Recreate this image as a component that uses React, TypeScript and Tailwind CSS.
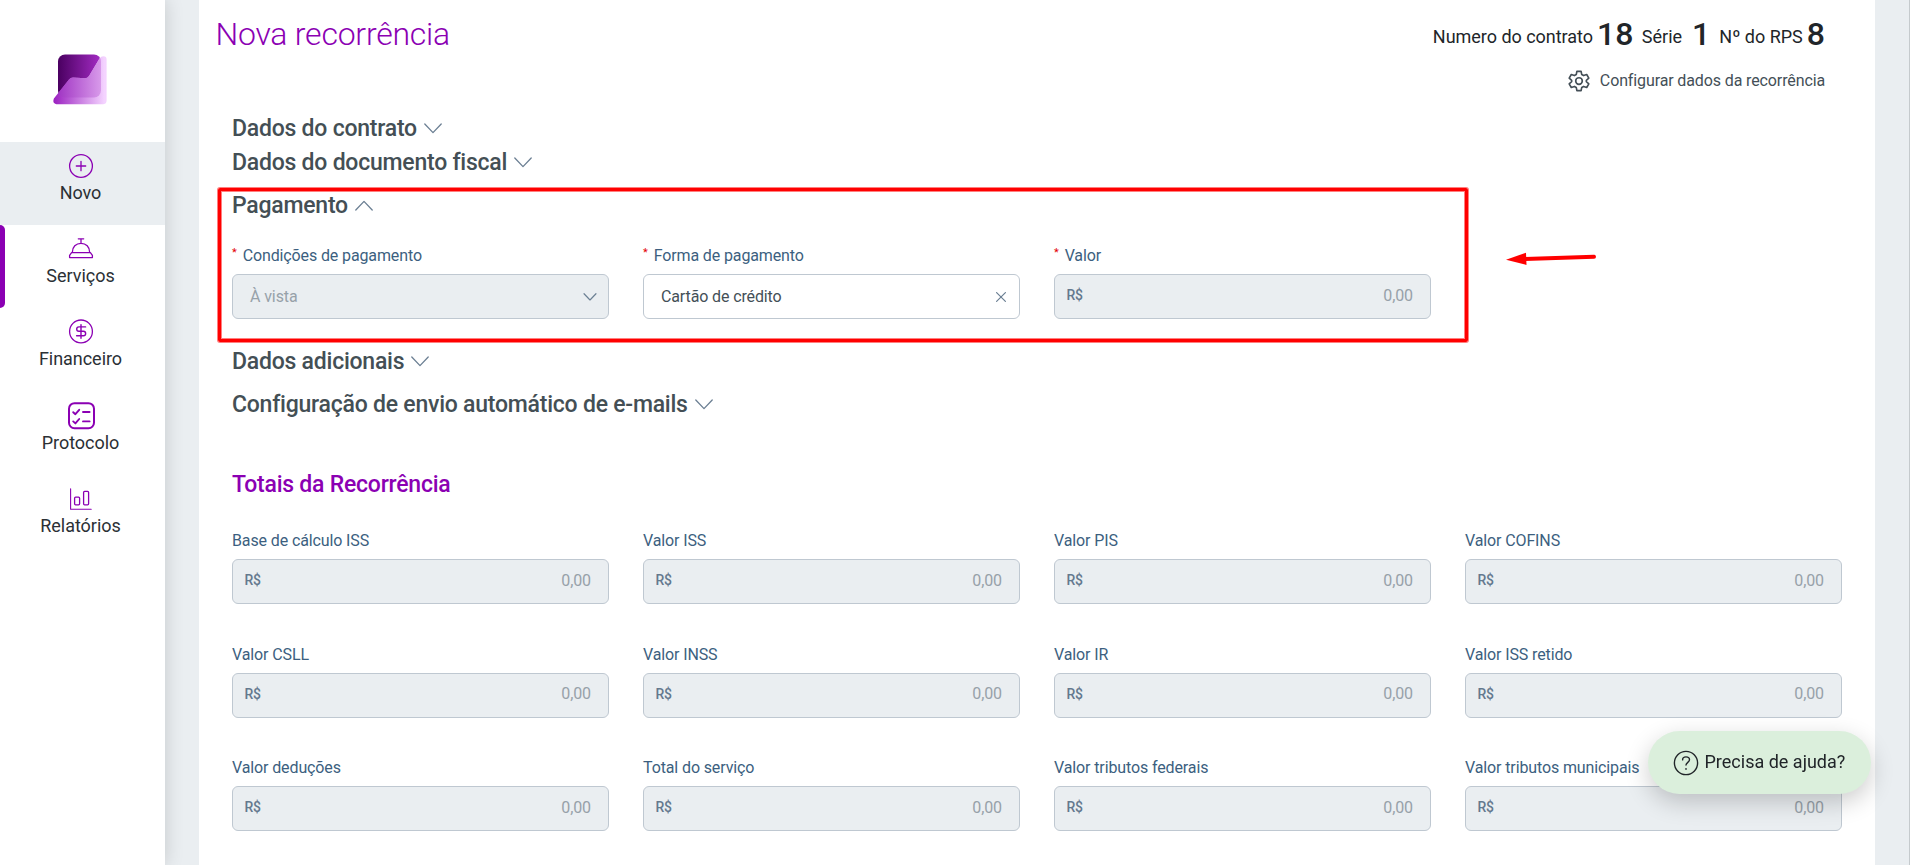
import { clsx } from "clsx";
import type { ReactNode } from "react";

interface FieldProps {
  label: string;
  required?: boolean;
}

const totals = [
  "Base de cálculo ISS",
  "Valor ISS",
  "Valor PIS",
  "Valor COFINS",
  "Valor CSLL",
  "Valor INSS",
  "Valor IR",
  "Valor ISS retido",
  "Valor deduções",
  "Total do serviço",
  "Valor tributos federais",
  "Valor tributos municipais",
];

function Logo() {
  return (
    <svg width="54" height="51" viewBox="0 0 54 51" fill="none">
      <defs>
        <linearGradient id="logo-back" x1="5" y1="22" x2="48" y2="22" gradientUnits="userSpaceOnUse">
          <stop stopColor="#4a0061" />
          <stop offset="1" stopColor="#a42cc4" />
        </linearGradient>
        <linearGradient id="logo-front" x1="0" y1="28" x2="54" y2="28" gradientUnits="userSpaceOnUse">
          <stop stopColor="#9a1fc0" />
          <stop offset="0.95" stopColor="#f4d3ff" />
        </linearGradient>
        <linearGradient id="logo-mix" x1="5" y1="28" x2="48" y2="28" gradientUnits="userSpaceOnUse">
          <stop stopColor="#a136c4" />
          <stop offset="1" stopColor="#d89aea" />
        </linearGradient>
        <clipPath id="logo-clip">
          <rect x="5" y="0.5" width="43" height="43" rx="7" />
        </clipPath>
      </defs>
      <rect x="5" y="0.5" width="43" height="43" rx="7" fill="url(#logo-back)" />
      <path
        d="M0.9 44.5L16 25.5Q17.5 23.5 20 23.5L32 24.2Q34.5 24.2 36 22L46.5 4.5Q48 2.3 50.5 2.3Q53.6 2.3 53.6 5.5V46.5Q53.6 50.2 50 50.2H3.5Q-1 49.5 0.9 44.5Z"
        fill="url(#logo-front)"
      />
      <path
        clipPath="url(#logo-clip)"
        d="M0.9 44.5L16 25.5Q17.5 23.5 20 23.5L32 24.2Q34.5 24.2 36 22L46.5 4.5Q48 2.3 50.5 2.3Q53.6 2.3 53.6 5.5V46.5Q53.6 50.2 50 50.2H3.5Q-1 49.5 0.9 44.5Z"
        fill="url(#logo-mix)"
      />
    </svg>
  );
}

function MenuIcon({ children }: { children: ReactNode }) {
  return (
    <svg
      width="28"
      height="28"
      viewBox="0 0 28 28"
      fill="none"
      stroke="#8b00b3"
      strokeWidth="1.3"
      strokeLinecap="round"
      strokeLinejoin="round"
    >
      {children}
    </svg>
  );
}

const menu = [
  {
    label: "Novo",
    icon: (
      <MenuIcon>
        <circle cx="14" cy="14" r="11.4" />
        <path d="M14 9.3V18.7M9.3 14H18.7" />
      </MenuIcon>
    ),
  },
  {
    label: "Serviços",
    icon: (
      <MenuIcon>
        <path d="M11.3 3.8H16.7M14 3.8V8.2M5.3 17.4C5.3 12 9 8.3 14 8.3S22.7 12 22.7 17.4" />
        <path d="M4.6 17.6H23.4L25.4 20.3V22.6H2.6V20.3Z" />
      </MenuIcon>
    ),
  },
  {
    label: "Financeiro",
    icon: (
      <MenuIcon>
        <circle cx="14" cy="13.4" r="11.4" />
        <path d="M14 6.6V20.2M18.6 8.9H11.9A2.1 2.1 0 0 0 11.9 13.3H16.4A2.2 2.2 0 0 1 16.4 17.8H9.6" strokeWidth="1.4" />
      </MenuIcon>
    ),
  },
  {
    label: "Protocolo",
    icon: (
      <MenuIcon>
        <rect x="2" y="1.2" width="25" height="25" rx="5.5" strokeWidth="2" />
        <path d="M6.2 10.2L8.4 12.2L12.2 7.8M6.2 19.4L8.4 21.4L12.2 17M16 10H22.6M16 19.4H22.6" strokeWidth="1.9" />
      </MenuIcon>
    ),
  },
  {
    label: "Relatórios",
    icon: (
      <MenuIcon>
        <path d="M3.6 3.8V24.2H24.2" strokeWidth="1.1" />
        <rect x="7.6" y="12.2" width="5" height="7.6" rx="1" />
        <rect x="16.6" y="6.4" width="5" height="13.4" rx="1" />
      </MenuIcon>
    ),
  },
];

function Sidebar() {
  return (
    <aside className="relative z-10 flex w-[165px] shrink-0 flex-col bg-white shadow-[0_0_18px_rgba(0,0,0,0.16)]">
      <div className="flex h-[142px] justify-center pt-[54px] pr-[5px]">
        <Logo />
      </div>
      <nav className="flex flex-col">
        {menu.map((item, i) => (
          <a
            key={item.label}
            className={clsx(
              "relative flex h-[83.2px] flex-col items-center pt-[10px] pr-1",
              i === 0 && "bg-[#eaeef1]"
            )}
          >
            {/* Active module marker */}
            {i === 1 && <span className="absolute inset-y-0 left-0 w-[5px] rounded-r-md bg-[#8b00b3]" />}
            {item.icon}
            <span className="text-[18px] leading-[26px] tracking-[-0.03px] text-[#2b3035]">{item.label}</span>
          </a>
        ))}
      </nav>
    </aside>
  );
}

function Chevron({ up = false, small = false }: { up?: boolean; small?: boolean }) {
  return (
    <svg
      width={small ? 14 : 18}
      height={small ? 8 : 11}
      viewBox="0 0 18 11"
      fill="none"
      stroke="#6b7f93"
      strokeWidth={small ? 1.6 : 1.3}
      strokeLinecap="round"
      strokeLinejoin="round"
      className={clsx(up && "rotate-180", !small && "mb-0.5")}
    >
      <path d="M0.8 1L9 9.6L17.2 1" />
    </svg>
  );
}

function SectionTitle({ children, open }: { children: ReactNode; open?: boolean }) {
  return (
    <h2 className="flex h-[34px] items-center gap-[7px] text-[23px] font-medium tracking-[-0.23px] text-[#444f55]">
      {children}
      <Chevron up={open} />
    </h2>
  );
}

function Label({ label, required }: FieldProps) {
  return (
    <label className="flex h-6 items-center text-base tracking-[-0.12px] text-[#3c5f80]">
      {required && <span className="mr-1.5 mb-1.5 text-[11px] text-[#e30000]">*</span>}
      {label}
    </label>
  );
}

function MoneyField({ label, required }: FieldProps) {
  return (
    <div className="flex flex-col gap-[6px]">
      <Label label={label} required={required} />
      <div className="flex h-[45px] items-center justify-between rounded-md border border-[#bfc8d1] bg-[#eaeef1] pr-[17px] pb-0.5 pl-[11.5px]">
        <span className="text-[14px] font-medium tracking-[-0.4px] text-[#64798e]">R$</span>
        <span className="text-base tracking-[-0.1px] text-[#97a1a9]">0,00</span>
      </div>
    </div>
  );
}

function GearIcon() {
  return (
    <svg width="22" height="22" viewBox="0 0 24 24" fill="none" stroke="#444f57" strokeWidth="1.8" strokeLinejoin="round">
      <path d="M9.7 1.5H14.3L15 5L17 6.1L20.4 4.9L22.7 8.9L20 11.2V12.8L22.7 15.1L20.4 19.1L17 17.9L15 19L14.3 22.5H9.7L9 19L7 17.9L3.6 19.1L1.3 15.1L4 12.8V11.2L1.3 8.9L3.6 4.9L7 6.1L9 5Z" />
      <circle cx="12" cy="12" r="3.6" />
    </svg>
  );
}

function Header() {
  return (
    <header className="flex h-[109px] justify-between pr-[50px] pl-[16.5px]">
      <h1 className="pt-[10px] text-[32px] leading-[48px] font-light tracking-[-0.24px] text-[#8b00b3]">Nova recorrência</h1>
      <div className="flex flex-col items-end">
        <div className="flex h-[68px] items-center text-[18px] text-[#212529]">
          <span className="mt-[5px] tracking-[-0.03px]">Numero do contrato</span>
          <strong className="ml-1 text-[32px] font-medium">18</strong>
          <span className="mt-[5px] ml-[8.5px]">Série</span>
          <strong className="ml-2.5 text-[32px] font-medium">1</strong>
          <span className="mt-[5px] ml-[9px]">Nº do RPS</span>
          <strong className="ml-1 text-[32px] font-medium">8</strong>
        </div>
        <button className="flex h-[26px] items-center gap-2.5 text-base tracking-[-0.12px] text-[#444f57]">
          <GearIcon />
          Configurar dados da recorrência
        </button>
      </div>
    </header>
  );
}

function HelpButton() {
  return (
    <button className="fixed top-[731px] left-[1648px] flex h-[63px] w-[223px] items-center rounded-full bg-[#dbefdc] pl-[25px] text-[18px] text-[#212529] shadow-[0_8px_24px_rgba(0,0,0,0.2)]">
      <svg width="26" height="26" viewBox="0 0 26 26" fill="none" stroke="#212529" strokeWidth="1.4" strokeLinecap="round">
        <circle cx="13" cy="13" r="11.6" />
        <path d="M9.6 9.9C9.6 8.1 11 6.9 13 6.9S16.5 8.1 16.5 9.8C16.5 12.3 13 12.4 13 15.1" />
        <path d="M13 18.9V19" strokeWidth="1.7" />
      </svg>
      <span className="mb-0.5 ml-[5.5px]">Precisa de ajuda?</span>
    </button>
  );
}

// Red frame and arrow that call out the payment section
function Callout() {
  return (
    <>
      <div className="pointer-events-none absolute top-[188px] left-[218px] h-[154px] w-[1250px] rounded-[2px] border-3 border-[#ff0000] shadow-[0_0_0_1px_rgba(255,0,0,0.5),inset_0_0_0_1px_rgba(255,0,0,0.5)]" />
      <svg className="pointer-events-none absolute top-[250px] left-[1505px]" width="94" height="18" viewBox="0 0 94 18">
        <path d="M20 9L89 6.7" stroke="#ff0000" strokeWidth="4" strokeLinecap="round" />
        <path d="M1 9.7L21 2.7L21.5 15Z" fill="#ff0000" />
      </svg>
    </>
  );
}

export default function App() {
  return (
    <div className="relative flex h-[865px] w-[1910px] overflow-hidden border-r border-[#c5cacd] bg-[#eaeef1] font-[Roboto,sans-serif]">
      <Sidebar />
      <main className="ml-[34px] w-[1676px] bg-white">
        <Header />
        <div className="flex flex-col pr-[33px] pl-[33px]">
          <div className="pt-[3px]">
            <SectionTitle>Dados do contrato</SectionTitle>
            <SectionTitle>Dados do documento fiscal</SectionTitle>
          </div>
          <div className="pt-[9px]">
            <SectionTitle open>Pagamento</SectionTitle>
            <div className="grid grid-cols-4 gap-x-[34px] pt-[21px]">
              <div className="flex flex-col gap-[6px]">
                <Label label="Condições de pagamento" required />
                <div className="flex h-[45px] items-center justify-between rounded-md border border-[#bfc8d1] bg-[#eaeef1] pr-[11px] pl-[17px] text-base tracking-[-0.1px] text-[#97a1a9]">
                  À vista
                  <Chevron small />
                </div>
              </div>
              <div className="flex flex-col gap-[6px]">
                <Label label="Forma de pagamento" required />
                <div className="flex h-[45px] items-center justify-between rounded-md border border-[#bfc8d1] bg-white pr-[13px] pl-[17px] text-base tracking-[-0.13px] text-[#444f57]">
                  Cartão de crédito
                  <svg width="10" height="10" viewBox="0 0 10 10" stroke="#6b7f93" strokeWidth="1.2" strokeLinecap="round">
                    <path d="M0.6 0.6L9.4 9.4M9.4 0.6L0.6 9.4" />
                  </svg>
                </div>
              </div>
              <MoneyField label="Valor" required />
            </div>
          </div>
          <div className="flex flex-col gap-[9px] pt-[26px]">
            <SectionTitle>Dados adicionais</SectionTitle>
            <SectionTitle>Configuração de envio automático de e-mails</SectionTitle>
          </div>
          <h2 className="mt-[46px] h-[34px] text-[23px] leading-[34px] font-medium tracking-[-0.23px] text-[#8b00b3]">
            Totais da Recorrência
          </h2>
          <div className="grid grid-cols-4 gap-x-[34px] gap-y-[38.5px] pt-[27px]">
            {totals.map((label) => (
              <MoneyField key={label} label={label} />
            ))}
          </div>
        </div>
      </main>
      <Callout />
      <HelpButton />
    </div>
  );
}
